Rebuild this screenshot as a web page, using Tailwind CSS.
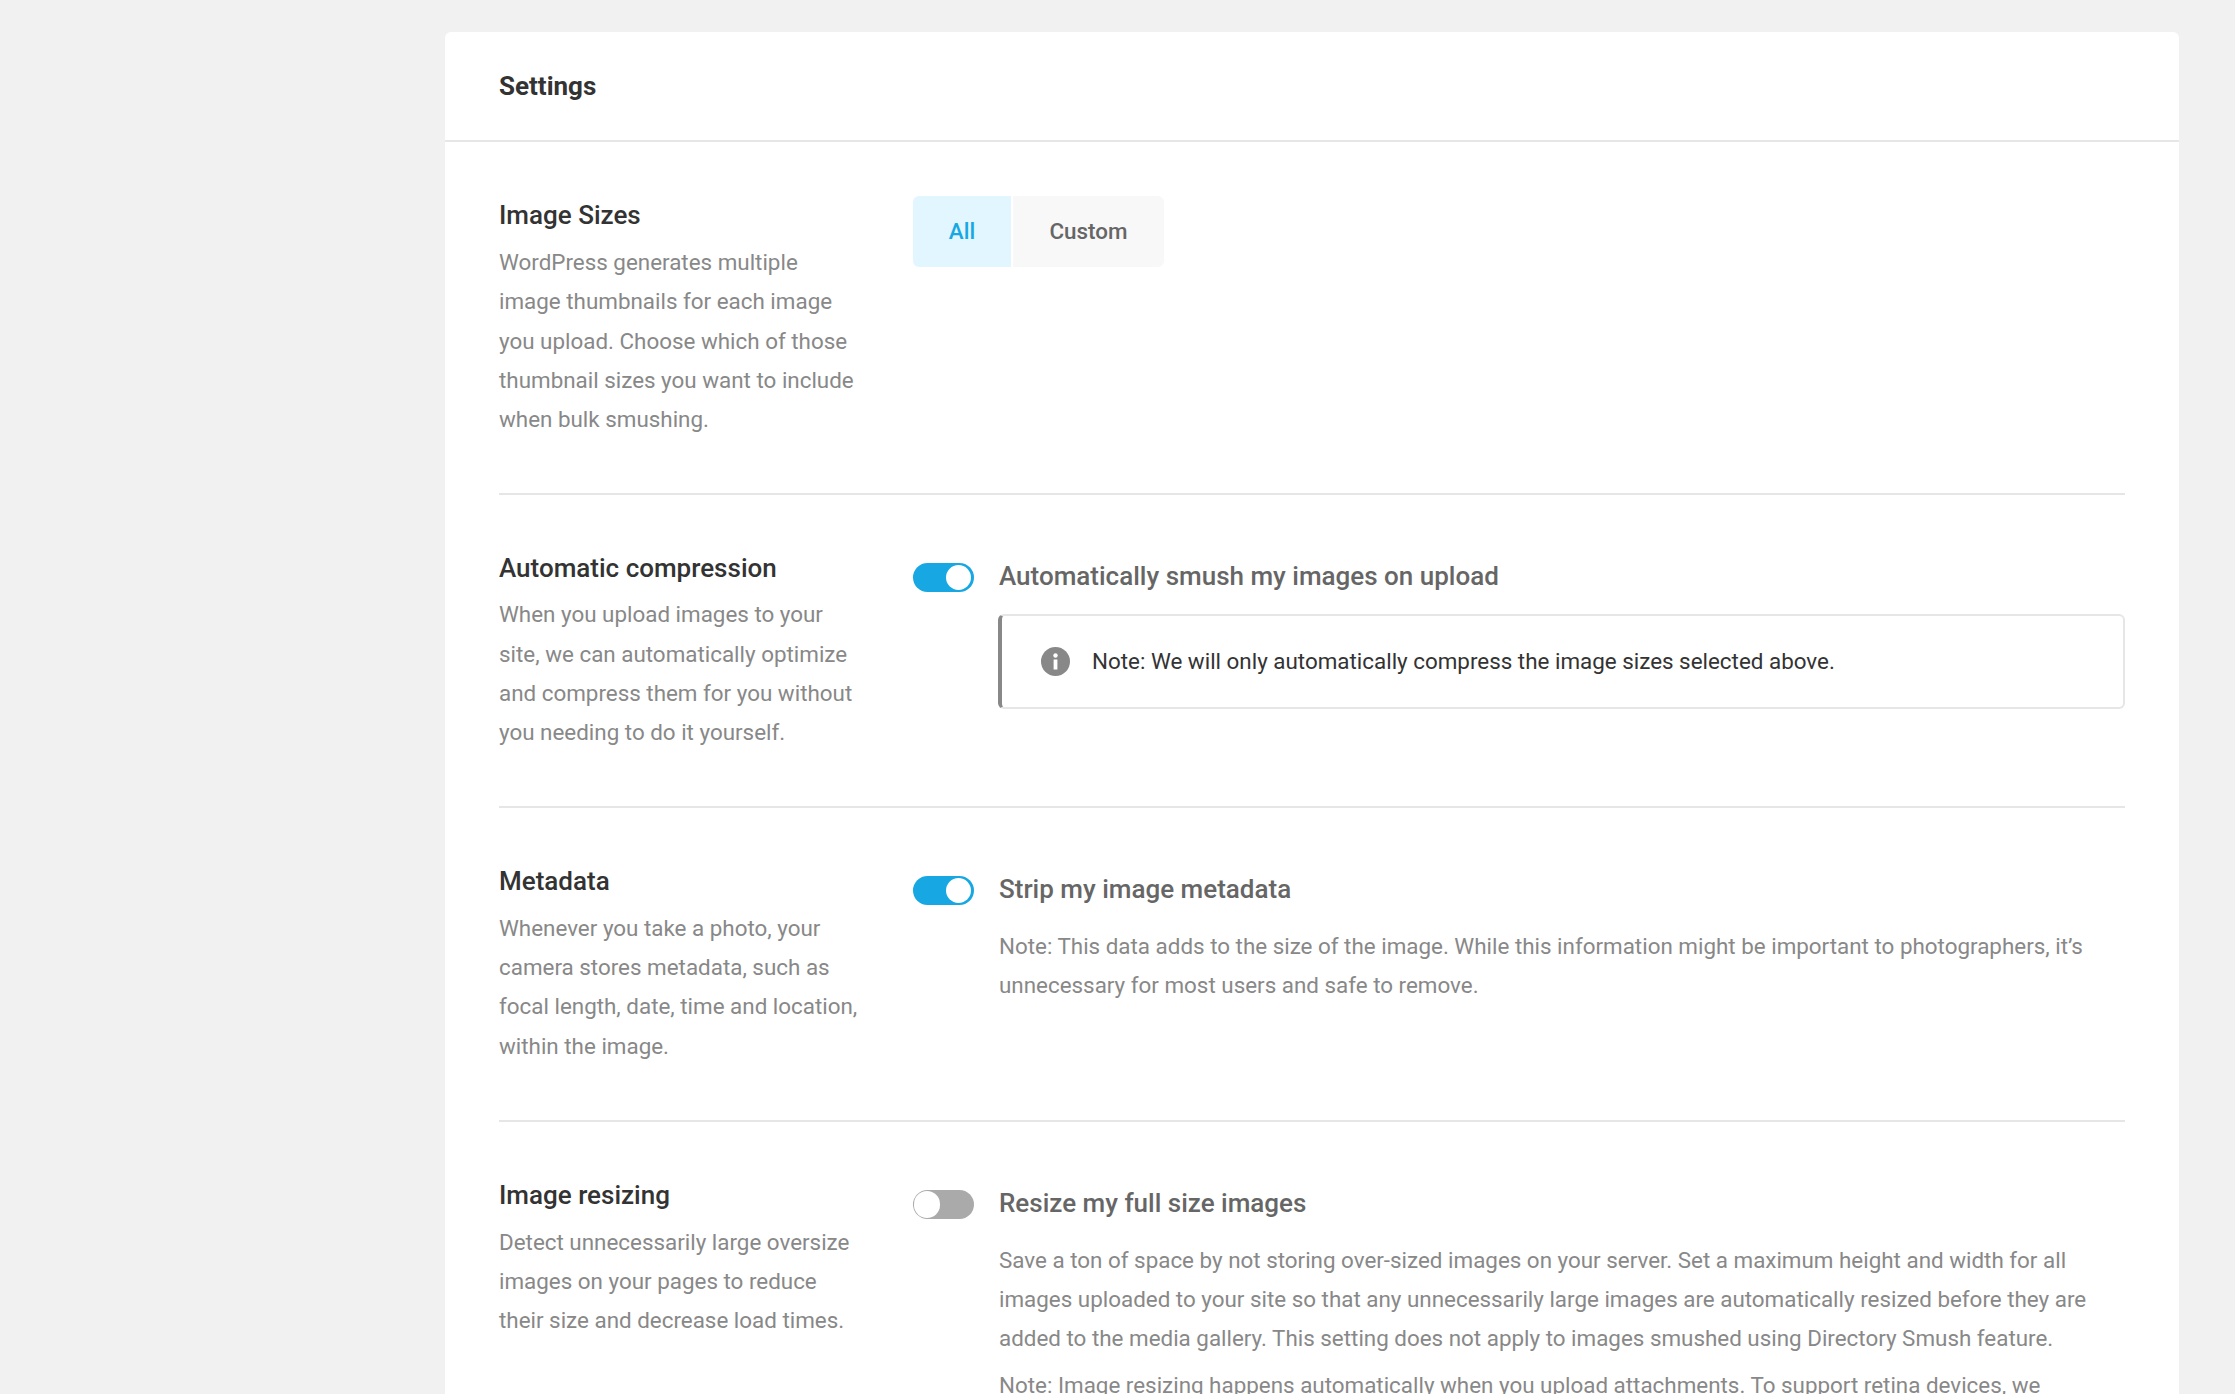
<!DOCTYPE html>
<html lang="en">

<head>
    <meta charset="UTF-8">
    <title>Settings</title>
    <script src="https://cdn.jsdelivr.net/npm/@tailwindcss/browser@4"></script>
</head>

<body class="h-[1394px] overflow-hidden bg-[#f1f1f1] font-['Roboto',sans-serif]">
    <div class="pt-8 pl-[445px]">
        <div class="w-[1734px] rounded-t-md bg-white">
            <div class="h-[110px] flex items-center px-[54px] border-b-2 border-[#e6e6e6]">
                <h1 class="text-[26px] font-bold text-[#333]">Settings</h1>
            </div>
            <div class="px-[54px]">

                <div class="flex py-[54px] border-b-2 border-[#e6e6e6]">
                    <div class="w-[414px] shrink-0 pr-[52px]">
                        <h2 class="text-[26px] leading-[39.2px] font-medium text-[#333]">Image Sizes</h2>
                        <p class="mt-2 text-[22.4px] leading-[39.2px] text-[#888]">WordPress generates multiple image thumbnails for each image you upload. Choose which of those thumbnail sizes you want to include when bulk smushing.</p>
                    </div>
                    <div class="flex-1">
                        <div class="flex gap-0.5">
                            <div class="w-[98px] h-[71px] flex items-center justify-center rounded-l-md bg-[#e1f6ff] text-[22.4px] font-medium text-[#17a8e3]">All</div>
                            <div class="w-[151px] h-[71px] flex items-center justify-center rounded-r-md bg-[#f8f8f8] text-[22.4px] font-medium text-[#666]">Custom</div>
                        </div>
                    </div>
                </div>

                <div class="flex py-[54px] border-b-2 border-[#e6e6e6]">
                    <div class="w-[414px] shrink-0 pr-[52px]">
                        <h2 class="text-[26px] leading-[39.2px] font-medium text-[#333]">Automatic compression</h2>
                        <p class="mt-[7px] text-[22.4px] leading-[39.2px] text-[#888]">When you upload images to your site, we can automatically optimize and compress them for you without you needing to do it yourself.</p>
                    </div>
                    <div class="flex-1 flex pt-2">
                        <div class="w-[61px] h-[29px] mt-1.5 shrink-0 flex justify-end items-center rounded-full bg-[#17a8e3] pr-[3px]">
                            <div class="w-[25px] h-[25px] rounded-full bg-white"></div>
                        </div>
                        <div class="flex-1 ml-[25px]">
                            <div class="text-[26px] leading-[39px] font-medium text-[#666]">Automatically smush my images on upload</div>
                            <div class="mt-[18px] -ml-px h-[95px] flex items-center pl-[39px] rounded-md border-2 border-l-4 border-[#e6e6e6] border-l-[#888]">
                                <svg class="w-[29px] h-[29px] shrink-0" viewBox="0 0 29 29">
                                    <circle cx="14.5" cy="14.5" r="14.5" fill="#888" />
                                    <circle cx="14.5" cy="8.5" r="2.2" fill="#fff" />
                                    <rect x="12.6" y="12.5" width="3.8" height="10" fill="#fff" />
                                </svg>
                                <p class="ml-[22px] text-[22.4px] text-[#333]">Note: We will only automatically compress the image sizes selected above.</p>
                            </div>
                        </div>
                    </div>
                </div>

                <div class="flex py-[54px] border-b-2 border-[#e6e6e6]">
                    <div class="w-[414px] shrink-0 pr-[52px]">
                        <h2 class="text-[26px] leading-[39.2px] font-medium text-[#333]">Metadata</h2>
                        <p class="mt-[7.5px] text-[22.4px] leading-[39.2px] text-[#888]">Whenever you take a photo, your camera stores metadata, such as focal length, date, time and location, within the image.</p>
                    </div>
                    <div class="flex-1 flex pt-2">
                        <div class="w-[61px] h-[29px] mt-1.5 shrink-0 flex justify-end items-center rounded-full bg-[#17a8e3] pr-[3px]">
                            <div class="w-[25px] h-[25px] rounded-full bg-white"></div>
                        </div>
                        <div class="flex-1 ml-[25px]">
                            <div class="text-[26px] leading-[39px] font-medium text-[#666]">Strip my image metadata</div>
                            <p class="mt-[18px] text-[22.4px] leading-[39.2px] text-[#888]">Note: This data adds to the size of the image. While this information might be important to photographers, it’s unnecessary for most users and safe to remove.</p>
                        </div>
                    </div>
                </div>

                <div class="flex py-[54px]">
                    <div class="w-[414px] shrink-0 pr-[52px]">
                        <h2 class="text-[26px] leading-[39.2px] font-medium text-[#333]">Image resizing</h2>
                        <p class="mt-2 text-[22.4px] leading-[39.2px] text-[#888]">Detect unnecessarily large oversize images on your pages to reduce their size and decrease load times.</p>
                    </div>
                    <div class="flex-1 flex pt-2">
                        <div class="w-[61px] h-[29px] mt-1.5 shrink-0 flex items-center rounded-full bg-[#aaa] pl-px">
                            <div class="w-[26px] h-[27px] rounded-full bg-white"></div>
                        </div>
                        <div class="flex-1 ml-[25px]">
                            <div class="text-[26px] leading-[39px] font-medium text-[#666]">Resize my full size images</div>
                            <p class="mt-[18px] text-[22.4px] leading-[39.2px] text-[#888]">Save a ton of space by not storing over-sized images on your server. Set a maximum height and width for all images uploaded to your site so that any unnecessarily large images are automatically resized before they are added to the media gallery. This setting does not apply to images smushed using Directory Smush feature.</p>
                            <p class="mt-2 text-[22.4px] leading-[39.2px] text-[#888]">Note: Image resizing happens automatically when you upload attachments. To support retina devices, we recommend using 2x the dimensions of your image size.</p>
                        </div>
                    </div>
                </div>

            </div>
        </div>
    </div>
</body>

</html>
